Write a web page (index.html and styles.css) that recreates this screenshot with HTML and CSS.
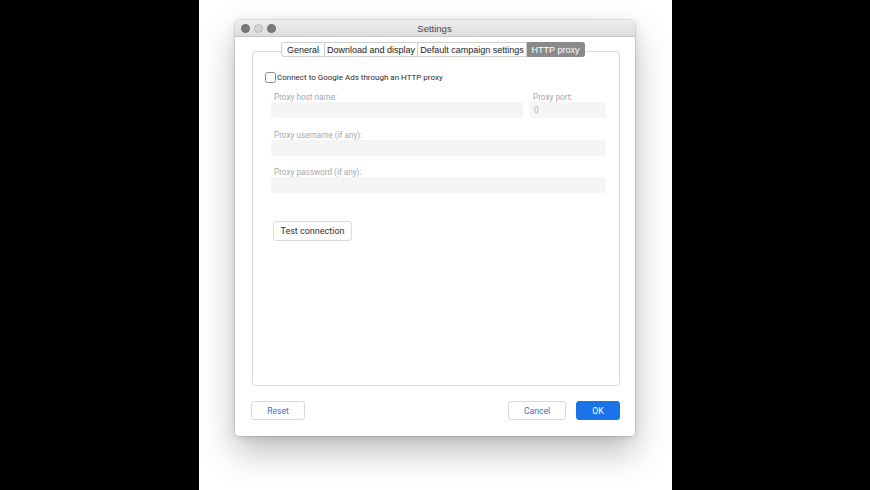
FILE: index.html
```html
<!DOCTYPE html>
<html>
<head>
<meta charset="utf-8">
<link rel="stylesheet" href="styles.css">
</head>
<body>
<div class="stage">
  <div class="window">
    <div class="titlebar">
      <div class="lights">
        <span class="light dark"></span>
        <span class="light pale"></span>
        <span class="light dark"></span>
      </div>
      <div class="title">Settings</div>
    </div>
    <div class="content">
      <div class="tabs">
        <div class="tab t1">General</div>
        <div class="tab t2">Download and display</div>
        <div class="tab t3">Default campaign settings</div>
        <div class="tab t4 active">HTTP proxy</div>
      </div>
      <div class="panel">
        <label class="check-row">
          <span class="checkbox"></span>
          <span class="check-label">Connect to Google Ads through an HTTP proxy</span>
        </label>
        <div class="row first">
          <div class="field host">
            <div class="flabel">Proxy host name:</div>
            <div class="input"></div>
          </div>
          <div class="field port">
            <div class="flabel">Proxy port:</div>
            <div class="input"><span class="val">0</span></div>
          </div>
        </div>
        <div class="row second">
          <div class="field wide">
            <div class="flabel">Proxy username (if any):</div>
            <div class="input"></div>
          </div>
        </div>
        <div class="row third">
          <div class="field wide">
            <div class="flabel">Proxy password (if any):</div>
            <div class="input"></div>
          </div>
        </div>
        <div class="test-row">
          <button class="btn test">Test connection</button>
        </div>
      </div>
      <div class="footer">
        <button class="btn reset">Reset</button>
        <div class="spacer"></div>
        <button class="btn cancel">Cancel</button>
        <button class="btn ok">OK</button>
      </div>
    </div>
  </div>
</div>
</body>
</html>
```

FILE: styles.css
```css
html, body {
  margin: 0;
  padding: 0;
  background: #000;
  height: 490px;
  overflow: hidden;
}
.stage {
  margin-left: 199px;
  width: 473px;
  height: 490px;
  background: #fff;
  padding-top: 20px;
  box-sizing: border-box;
}
.window {
  margin-left: 36px;
  width: 400px;
  height: 416px;
  background: #fff;
  border-radius: 4px;
  box-shadow: 0 0 0 1px rgba(0,0,0,0.09), 0 16px 34px rgba(0,0,0,0.26), 0 2px 8px rgba(0,0,0,0.10);
  display: flex;
  flex-direction: column;
  font-family: Roboto, "Liberation Sans", sans-serif;
}
.titlebar {
  height: 17px;
  background: linear-gradient(#eeeeee, #dcdcdc);
  border-bottom: 1px solid #c8c8c8;
  border-radius: 4px 4px 0 0;
  display: flex;
  align-items: center;
  box-sizing: border-box;
}
.lights {
  display: flex;
  gap: 4px;
  margin-left: 6px;
}
.light {
  width: 9px;
  height: 9px;
  border-radius: 50%;
  box-sizing: border-box;
}
.light.dark { background: #7b7b7b; border: 0.5px solid #6a6a6a; }
.light.pale { background: #d3d3d3; border: 0.5px solid #b9b9b9; }
.title {
  flex: 1;
  text-align: center;
  margin-right: 42px;
  font-family: "Liberation Sans", Arial, sans-serif;
  font-size: 9.5px;
  color: #4a4a4a;
}
.content {
  flex: 1;
  display: flex;
  flex-direction: column;
  padding: 0 15px 0 16px;
}
.tabs {
  display: flex;
  margin: 5px 0 -6px 30px;
  height: 15px;
  position: relative;
  z-index: 1;
  font-family: "Liberation Sans", Arial, sans-serif;
  font-size: 9px;
  color: #222;
}
.tab {
  height: 15px;
  line-height: 14px;
  background: #fff;
  border: 1px solid #cfcfcf;
  border-left: none;
  box-sizing: border-box;
  text-align: center;
  white-space: nowrap;
}
.tab.t1 { width: 44px; border-left: 1px solid #cfcfcf; border-radius: 3px 0 0 3px; }
.tab.t2 { width: 93px; }
.tab.t3 { width: 109px; }
.tab.t4 { width: 58px; border-radius: 0 3px 3px 0; }
.tab.active {
  background: #8a8a8a;
  border-color: #8a8a8a;
  color: #fff;
}
.panel {
  height: 335px;
  box-sizing: border-box;
  border: 1px solid #dcdcdc;
  border-radius: 3px;
  margin-left: 1px;
  padding: 20px 13px 0 18px;
  display: flex;
  flex-direction: column;
}
.check-row {
  display: flex;
  align-items: center;
  height: 11px;
  margin-left: -6px;
}
.checkbox {
  width: 11px;
  height: 11px;
  box-sizing: border-box;
  border: 1px solid #8a8a8a;
  border-radius: 2.5px;
  background: #fff;
}
.check-label {
  margin-left: 1px;
  font-size: 8px;
  color: #2b2b2b;
}
.row {
  display: flex;
  gap: 7px;
}
.row.first { margin-top: 9px; }
.row.second { margin-top: 12px; }
.row.third { margin-top: 11px; }
.field { display: flex; flex-direction: column; }
.field.host { width: 252px; }
.field.port { width: 76px; }
.field.wide { width: 335px; }
.flabel {
  height: 10px;
  line-height: 10px;
  font-size: 8.2px;
  color: #a8a8a8;
  padding-left: 3px;
}
.input {
  height: 16px;
  background: #f5f5f6;
  border-radius: 2px;
  display: flex;
  align-items: center;
}
.val {
  font-size: 8.2px;
  color: #b5b5b5;
  padding-left: 4px;
}
.test-row {
  margin-top: 26px;
  padding-left: 2px;
}
.btn {
  font-family: Roboto, "Liberation Sans", sans-serif;
  border: 1px solid #dadada;
  background: #fff;
  border-radius: 3px;
  padding: 0;
  box-sizing: border-box;
  cursor: default;
}
.btn.test {
  width: 79px;
  height: 20px;
  font-size: 9px;
  color: #333;
}
.footer {
  display: flex;
  gap: 10px;
  margin-top: 15px;
  height: 19px;
}
.spacer { flex: 1; }
.btn.reset, .btn.cancel {
  height: 19px;
  font-size: 8.6px;
  color: #3a6fc4;
}
.btn.reset { width: 54px; }
.btn.cancel { width: 58px; }
.btn.ok {
  width: 44px;
  height: 19px;
  font-size: 8.6px;
  color: #fff;
  background: #1a73e8;
  border-color: #1a73e8;
}
```
